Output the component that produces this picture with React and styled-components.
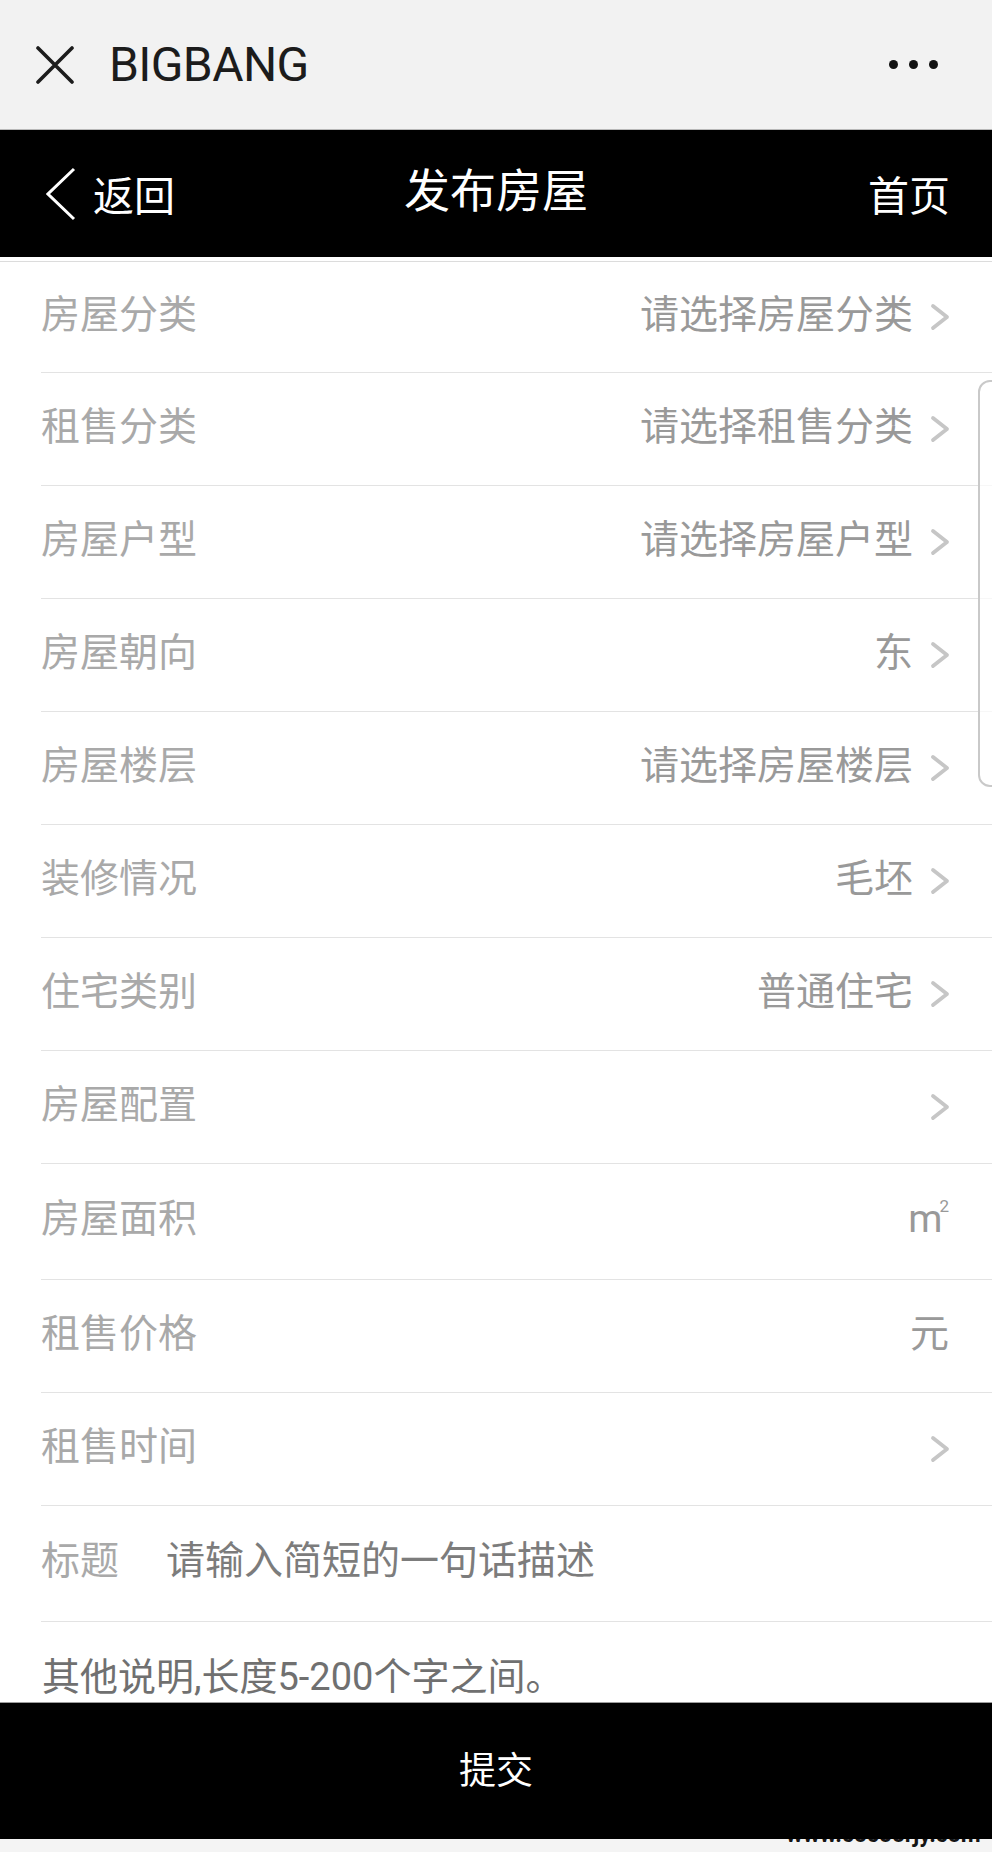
import styled, { createGlobalStyle } from 'styled-components';

const GlobalStyle = createGlobalStyle`
    html, body {
        margin: 0;
        padding: 0;
        background: #ffffff;
    }
    * {
        box-sizing: border-box;
    }
    body {
        font-family: Roboto, "Noto Sans CJK SC", sans-serif;
    }
`

const Page = styled.div`
    position: relative;
    width: 992px;
    height: 1852px;
    overflow: hidden;
    display: flex;
    flex-direction: column;
    background: #ffffff;
`

const TopBar = styled.div`
    height: 130px;
    flex: none;
    display: flex;
    align-items: center;
    padding: 0 54px 0 36px;
    background: #f2f2f2;
    border-bottom: 1px solid #b8b8b8;
`

const AppName = styled.div`
    margin-left: 35px;
    font-family: Roboto, sans-serif;
    font-size: 48px;
    letter-spacing: -0.6px;
    color: #1c1c1c;
    line-height: 1;
    flex: 1;
`

const Dots = styled.div`
    display: flex;
    gap: 11px;

    span {
        width: 9px;
        height: 9px;
        border-radius: 50%;
        background: #111111;
    }
`

const NavBar = styled.div`
    height: 127px;
    flex: none;
    display: grid;
    grid-template-columns: 1fr auto 1fr;
    align-items: center;
    background: #000000;
    color: #ffffff;
`

const NavSide = styled.div`
    display: flex;
    align-items: center;
    justify-content: ${props => props.$right ? 'flex-end' : 'flex-start'};
    padding: ${props => props.$right ? '7px 42px 0 0' : '0 0 0 46px'};
    font-size: 41px;
    line-height: 1;
`

const BackText = styled.span`
    margin-left: 17px;
    padding-top: 7px;
`

const NavTitle = styled.div`
    font-size: 46px;
    line-height: 1;
    padding-bottom: 5px;
`

const NavGap = styled.div`
    height: 5px;
    flex: none;
    border-bottom: 1px solid #dcdcdc;
`

const Row = styled.div`
    height: ${props => props.$h}px;
    flex: none;
    margin-left: 41px;
    padding-right: ${props => props.$arrow ? 41 : 43}px;
    display: flex;
    align-items: center;
    border-bottom: 1px solid #e3e3e3;
    font-size: 39px;
    line-height: 1;
`

const Label = styled.div`
    color: #a9a9a9;
    width: ${props => props.$w ? `${props.$w}px` : 'auto'};
    flex: ${props => props.$w ? 'none' : '1'};
    padding-bottom: 4px;
`

const Value = styled.div`
    color: ${props => props.$dark ? '#7c7c7c' : '#999999'};
    padding-bottom: 4px;
    flex: ${props => props.$grow ? '1' : 'none'};
`

const Sup = styled.span`
    font-size: 17px;
    vertical-align: top;
    margin-left: -3px;
    position: relative;
    top: -2px;
`

const Chevron = styled.svg`
    margin-left: 17px;
    flex: none;
`

const Notes = styled.div`
    height: 80px;
    flex: none;
    padding: 31px 0 0 42px;
    font-size: 38px;
    line-height: 48px;
    color: #707070;
    overflow: hidden;
    white-space: nowrap;
`

const SubmitBar = styled.div`
    height: 137px;
    flex: none;
    display: flex;
    align-items: center;
    justify-content: center;
    background: #000000;
    border-top: 1px solid #9c9c9c;
    color: #ffffff;
    font-size: 37px;
    line-height: 1;
    position: relative;
    z-index: 1;
`

const Footer = styled.div`
    flex: 1;
    position: relative;
    overflow: hidden;
    background: #f4f4f4;
`

const Watermark = styled.span`
    position: absolute;
    left: 786px;
    top: -16px;
    font-family: Roboto, sans-serif;
    font-weight: 700;
    font-size: 23px;
    line-height: 1;
    color: #141414;
    white-space: nowrap;
`

const ScrollThumb = styled.div`
    position: absolute;
    left: 978px;
    top: 380px;
    width: 40px;
    height: 407px;
    border: 2px solid #c9c9c9;
    border-radius: 12px;
    background: rgba(255, 255, 255, 0.7);
`

function Arrow() {
    return (
        <Chevron width="21" height="28" viewBox="0 0 21 28">
            <polyline points="3,3 17,14 3,25" fill="none" stroke="#c6c6c6" strokeWidth="3.8" strokeLinecap="round" strokeLinejoin="round" />
        </Chevron>
    )
}

const rows = [
    { label: '房屋分类', value: '请选择房屋分类', arrow: true, h: 111 },
    { label: '租售分类', value: '请选择租售分类', arrow: true, h: 113 },
    { label: '房屋户型', value: '请选择房屋户型', arrow: true, h: 113 },
    { label: '房屋朝向', value: '东', arrow: true, h: 113 },
    { label: '房屋楼层', value: '请选择房屋楼层', arrow: true, h: 113 },
    { label: '装修情况', value: '毛坯', arrow: true, h: 113 },
    { label: '住宅类别', value: '普通住宅', arrow: true, h: 113 },
    { label: '房屋配置', value: '', arrow: true, h: 113 },
    { label: '房屋面积', value: 'm', sup: '2', arrow: false, h: 116 },
    { label: '租售价格', value: '元', arrow: false, h: 113 },
    { label: '租售时间', value: '', arrow: true, h: 113 },
]

export default function App() {
    return (
        <>
            <GlobalStyle />
            <Page>
                <TopBar>
                    <svg width="38" height="38" viewBox="0 0 38 38">
                        <path d="M2 2 L36 36 M36 2 L2 36" stroke="#1c1c1c" strokeWidth="3.6" strokeLinecap="round" />
                    </svg>
                    <AppName>BIGBANG</AppName>
                    <Dots><span /><span /><span /></Dots>
                </TopBar>

                <NavBar>
                    <NavSide>
                        <svg width="30" height="54" viewBox="0 0 30 54">
                            <polyline points="28,2 2,27 28,52" fill="none" stroke="#ffffff" strokeWidth="3" />
                        </svg>
                        <BackText>返回</BackText>
                    </NavSide>
                    <NavTitle>发布房屋</NavTitle>
                    <NavSide $right>首页</NavSide>
                </NavBar>
                <NavGap />

                {rows.map((row, index) => (
                    <Row key={index} $h={row.h} $arrow={row.arrow}>
                        <Label>{row.label}</Label>
                        {row.value && (
                            <Value>
                                {row.value}
                                {row.sup && <Sup>{row.sup}</Sup>}
                            </Value>
                        )}
                        {row.arrow && <Arrow />}
                    </Row>
                ))}

                <Row $h={116}>
                    <Label $w={125}>标题</Label>
                    <Value $dark $grow>请输入简短的一句话描述</Value>
                </Row>

                <Notes>其他说明,长度5-200个字之间。</Notes>

                <SubmitBar>提交</SubmitBar>
                <Footer>
                    <Watermark>www.cocoorjy.com</Watermark>
                </Footer>

                <ScrollThumb />
            </Page>
        </>
    )
}
